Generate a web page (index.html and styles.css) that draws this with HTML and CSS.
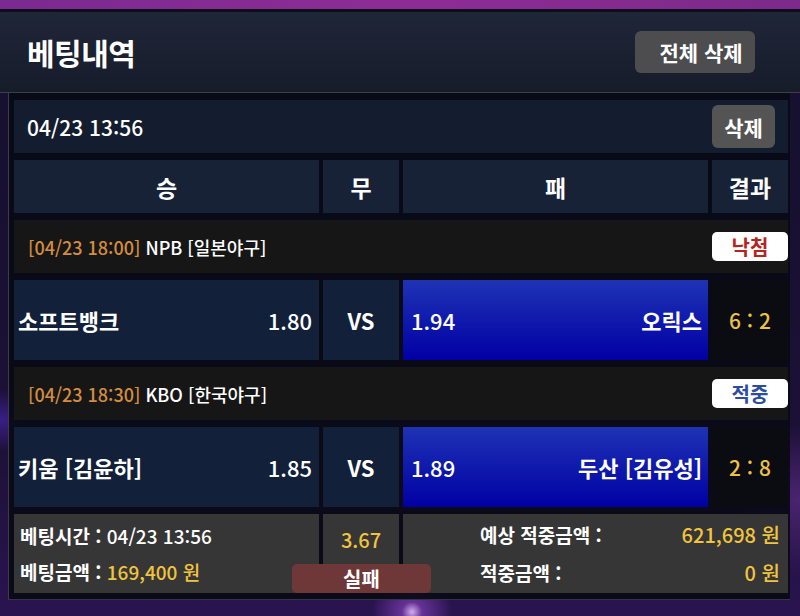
FILE: index.html
```html
<!DOCTYPE html>
<html lang="ko">
<head>
  <meta charset="UTF-8">
  <meta name="viewport" content="width=device-width, initial-scale=1.0">
  <title>베팅내역</title>
  <link rel="stylesheet" href="styles.css">
</head>
<body>
  <div class="top-strip"></div>

  <div class="page-head">
    <h1>베팅내역</h1>
    <button class="btn btn-all">전체 삭제</button>
  </div>

  <div class="frame">
    <div class="bet-date">
      <span>04/23 13:56</span>
      <button class="btn btn-del">삭제</button>
    </div>

    <div class="grid head-row">
      <div class="cell">승</div>
      <div class="cell">무</div>
      <div class="cell">패</div>
      <div class="cell">결과</div>
    </div>

    <div class="league">
      <span><em>[04/23 18:00]</em> NPB [일본야구]</span>
      <span class="badge lose">낙첨</span>
    </div>

    <div class="grid match">
      <div class="cell team home"><span>소프트뱅크</span><span class="odd">1.80</span></div>
      <div class="cell vs">VS</div>
      <div class="cell team away picked"><span class="odd">1.94</span><span>오릭스</span></div>
      <div class="cell score">6 : 2</div>
    </div>

    <div class="league">
      <span><em>[04/23 18:30]</em> KBO [한국야구]</span>
      <span class="badge win">적중</span>
    </div>

    <div class="grid match">
      <div class="cell team home"><span>키움 [김윤하]</span><span class="odd">1.85</span></div>
      <div class="cell vs">VS</div>
      <div class="cell team away picked"><span class="odd">1.89</span><span>두산 [김유성]</span></div>
      <div class="cell score">2 : 8</div>
    </div>

    <div class="grid summary">
      <div class="cell sum-left">
        <div>베팅시간 : <span class="plain">04/23 13:56</span></div>
        <div>베팅금액 : <span class="gold">169,400 원</span></div>
      </div>
      <div class="cell sum-mid">
        <span class="gold">3.67</span>
        <span class="result-tag">실패</span>
      </div>
      <div class="cell sum-right">
        <span>예상 적중금액 :</span><span class="gold">621,698 원</span>
        <span>적중금액 :</span><span class="gold">0 원</span>
      </div>
    </div>
  </div>
</body>
</html>
```

FILE: styles.css
```css
* {
  margin: 0;
  padding: 0;
  box-sizing: border-box;
}

body {
  width: 800px;
  height: 616px;
  overflow: hidden;
  font-family: "Noto Sans CJK KR", "Noto Sans", sans-serif;
  color: #fff;
  background:
    radial-gradient(circle at 412px 612px, rgba(230, 190, 255, 0.9) 0, rgba(160, 80, 220, 0.5) 10px, rgba(60, 20, 110, 0) 40px),
    radial-gradient(ellipse at 0 420px, #3a1f86 0, rgba(40, 20, 100, 0) 60px),
    radial-gradient(ellipse at 800px 500px, #4a2470 0, rgba(50, 20, 80, 0) 120px),
    linear-gradient(180deg, #15102e, #1c1036 70%, #2a1450);
}

.top-strip {
  height: 12px;
  background: linear-gradient(90deg, #7a2a92, #8e2c95 50%, #7c2a8c);
  border-bottom: 3px solid #0d0f18;
}

.page-head {
  height: 81px;
  display: flex;
  justify-content: space-between;
  align-items: center;
  padding: 0 45px 0 27px;
  background: linear-gradient(180deg, #1f2638, #161c2a);
  border-bottom: 1px solid #3a3f4b;
}

.page-head h1 {
  font-size: 30px;
  font-weight: 700;
  letter-spacing: -0.5px;
}

.btn {
  font-family: inherit;
  color: #fff;
  font-weight: 700;
  border: none;
  border-radius: 6px;
  background: #545454;
}

.btn-all {
  width: 120px;
  height: 42px;
  font-size: 21px;
  padding-left: 12px;
  background: #4d4d4f;
}

.frame {
  margin-left: 8px;
  width: 782px;
  height: 507px;
  padding: 7px 2px 0 5px;
  display: flex;
  flex-direction: column;
  gap: 7px;
  background: rgba(9, 10, 22, 0.93);
  border-left: 1px solid #3b3c4c;
  border-bottom: 1px solid #343646;
}

.bet-date {
  height: 53px;
  flex: none;
  display: flex;
  justify-content: space-between;
  align-items: center;
  padding: 0 13px;
  font-size: 21px;
  font-weight: 500;
  background: #141d30;
}

.btn-del {
  width: 63px;
  height: 43px;
  font-size: 21px;
}

.grid {
  flex: none;
  display: grid;
  grid-template-columns: 305px 76px 305px 76px;
  column-gap: 4px;
}

.cell {
  display: flex;
  align-items: center;
  justify-content: center;
}

.head-row {
  height: 53px;
}

.head-row .cell {
  background: #172237;
  font-size: 23px;
  font-weight: 700;
}

.league {
  height: 53px;
  flex: none;
  display: flex;
  justify-content: space-between;
  align-items: center;
  padding-left: 14px;
  font-size: 18px;
  font-weight: 500;
  background: #161616;
}

.league em {
  font-style: normal;
  color: #d48d40;
}

.badge {
  width: 76px;
  height: 29px;
  display: flex;
  align-items: center;
  justify-content: center;
  border-radius: 5px;
  background: #fff;
  font-size: 20px;
  font-weight: 700;
}

.badge.lose {
  color: #b5241d;
}

.badge.win {
  color: #2c4e9d;
}

.match {
  height: 80px;
  font-size: 22px;
}

.team {
  justify-content: space-between;
  font-weight: 700;
}

.home {
  background: #12203a;
  padding: 0 7px 0 4px;
}

.away {
  padding: 0 6px 0 8px;
}

.picked {
  background: linear-gradient(180deg, #1f33b4, #0000a4);
}

.odd {
  font-weight: 500;
  font-size: 22px;
}

.vs {
  background: #12203a;
  font-weight: 700;
}

.score {
  background: #0b0b12;
  color: #ecc145;
  font-size: 21px;
  font-weight: 500;
}

.summary {
  height: 79px;
  font-size: 19px;
  font-weight: 700;
}

.summary .cell {
  background: #363636;
}

.gold {
  color: #f1c43e;
  font-weight: 500;
}

.plain {
  font-weight: 500;
}

.sum-left {
  flex-direction: column;
  align-items: flex-start;
  gap: 9px;
  padding-left: 6px;
}

.sum-mid {
  position: relative;
  align-items: flex-start;
  padding-top: 11px;
  font-size: 20px;
}

.result-tag {
  position: absolute;
  left: -31px;
  bottom: 0;
  width: 139px;
  height: 29px;
  display: flex;
  align-items: center;
  justify-content: center;
  border-radius: 5px;
  background: #6e3838;
  font-weight: 700;
  font-size: 20px;
}

.sum-right {
  grid-column: span 2;
  display: grid;
  grid-template-columns: 1fr auto;
  align-content: center;
  row-gap: 9px;
  padding: 0 8px 0 77px;
}

.sum-right .gold {
  text-align: right;
  font-size: 20px;
}
```
